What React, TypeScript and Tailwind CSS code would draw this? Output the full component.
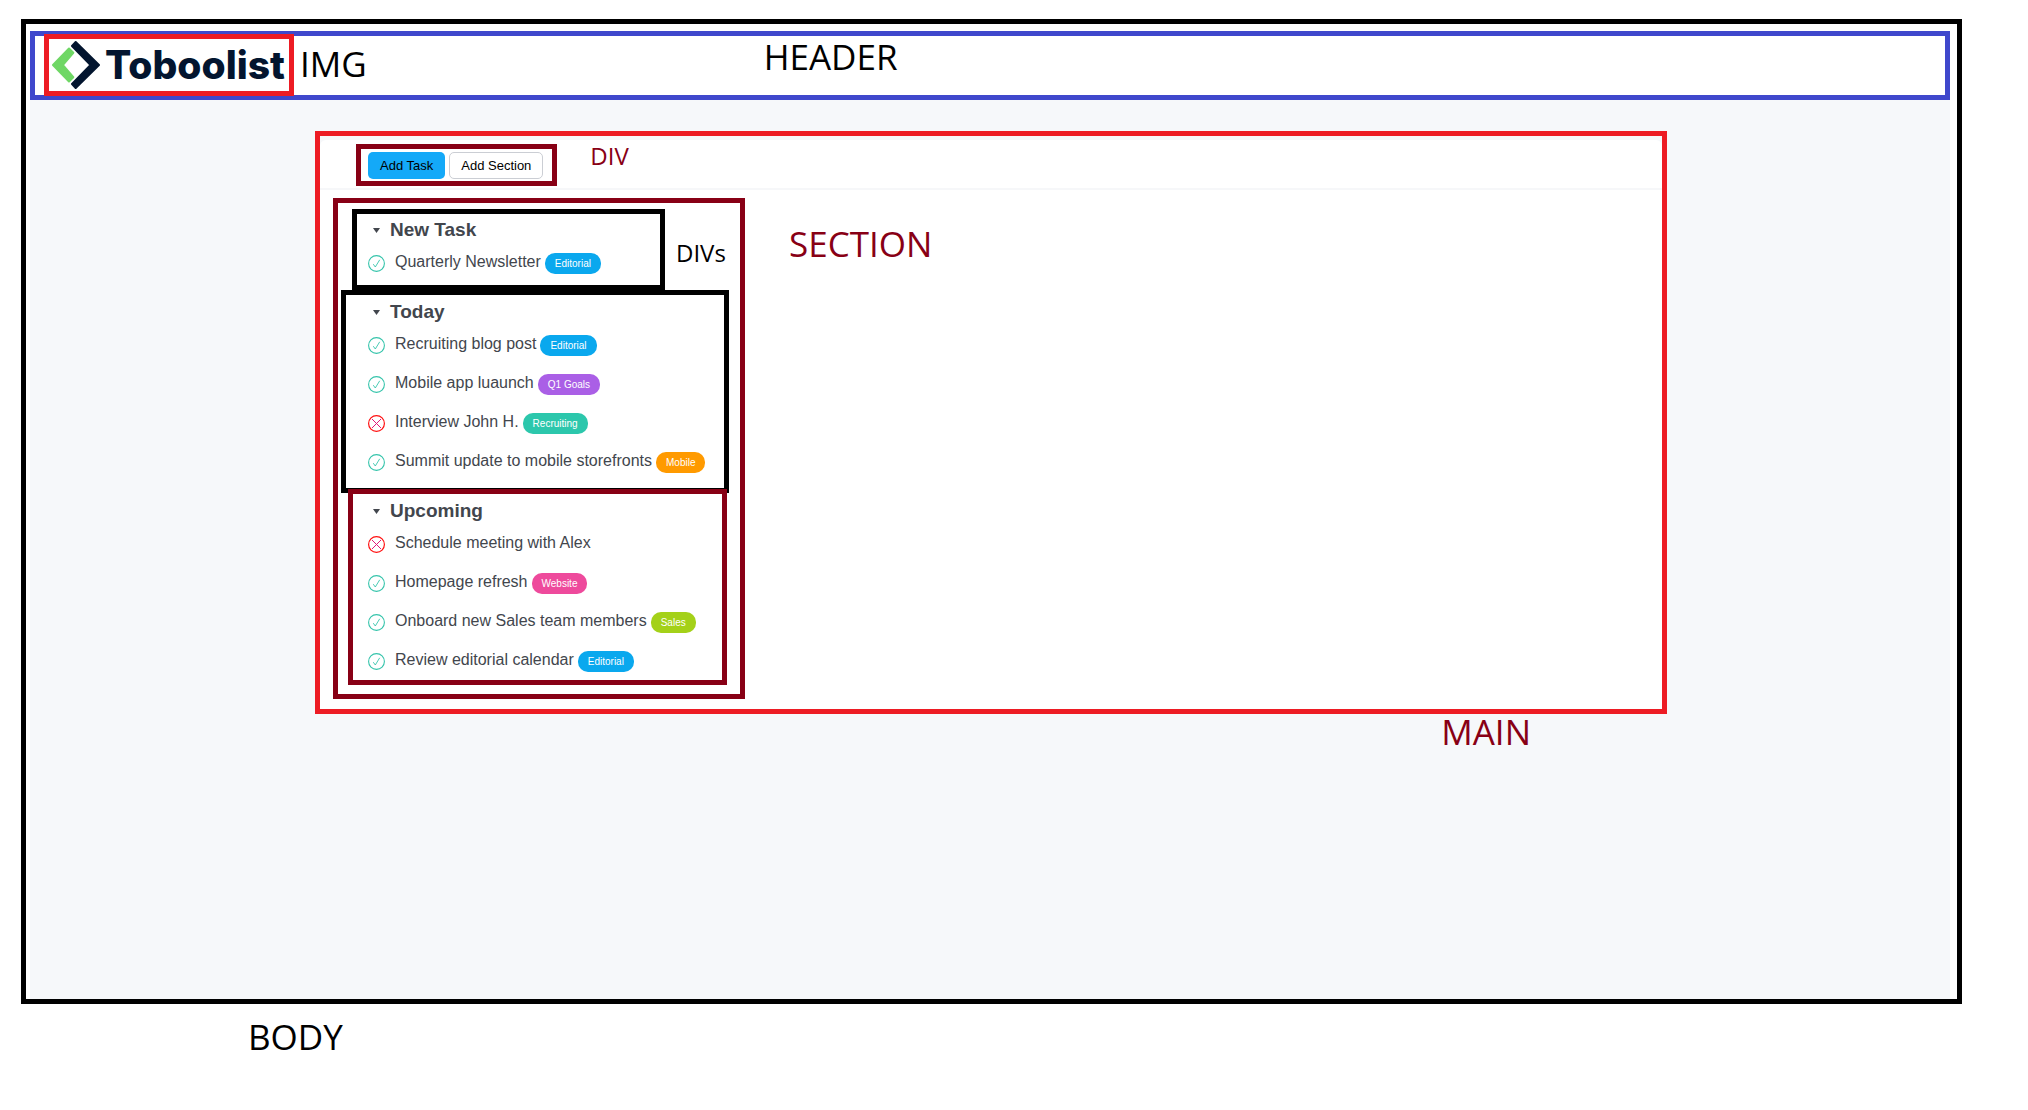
import { useState } from "react";
import type { ReactNode } from "react";

type Task = { title: string; done: boolean; tag?: string; tagClass?: string };

const newTasks: Task[] = [
  { title: "Quarterly Newsletter", done: true, tag: "Editorial", tagClass: "bg-[#0aa8ee]" },
];

const todayTasks: Task[] = [
  { title: "Recruiting blog post", done: true, tag: "Editorial", tagClass: "bg-[#0aa8ee]" },
  { title: "Mobile app luaunch", done: true, tag: "Q1 Goals", tagClass: "bg-[#aa5fe6]" },
  { title: "Interview John H.", done: false, tag: "Recruiting", tagClass: "bg-[#2cc7ac]" },
  { title: "Summit update to mobile storefronts", done: true, tag: "Mobile", tagClass: "bg-[#ff9a00]" },
];

const upcomingTasks: Task[] = [
  { title: "Schedule meeting with Alex", done: false },
  { title: "Homepage refresh", done: true, tag: "Website", tagClass: "bg-[#ee4a9c]" },
  { title: "Onboard new Sales team members", done: true, tag: "Sales", tagClass: "bg-[#a4d119]" },
  { title: "Review editorial calendar", done: true, tag: "Editorial", tagClass: "bg-[#0aa8ee]" },
];

function Logo() {
  return (
    <svg viewBox="0 0 48 48" className="size-12 shrink-0" strokeWidth="2" strokeLinejoin="round" aria-hidden="true">
      <path d="M17 7.5 L1 24 L17 40.5 L21.3 36.2 L10.8 24 L21.3 11.8 Z" fill="#6fd765" stroke="#6fd765" />
      <path d="M23.7 1 L47 24 L23.7 47 L20 43 L38.5 24 L20 5 Z" fill="#03152f" stroke="#03152f" />
    </svg>
  );
}

function StatusIcon({ done }: { done: boolean }) {
  return done ? (
    <svg viewBox="0 0 17 17" className="size-[17px]" fill="none" stroke="#35c4ab" aria-hidden="true">
      <circle cx="8.5" cy="8.5" r="7.9" strokeWidth="1.1" />
      <path d="M5.3 9.2 L7.3 12 L11.7 4.8" strokeWidth="0.9" />
    </svg>
  ) : (
    <svg viewBox="0 0 17 17" className="size-[17px]" fill="none" aria-hidden="true">
      <circle cx="8.5" cy="8.5" r="7.9" stroke="#ff1010" strokeWidth="1.2" />
      <path d="M4 4 L13 13 M13 4 L4 13" stroke="#e0187a" strokeWidth="1" />
    </svg>
  );
}

function TaskRow({ task }: { task: Task }) {
  const [done, setDone] = useState(task.done);
  return (
    <li className="flex h-6 items-baseline gap-1">
      <label className="flex h-6 cursor-pointer items-baseline gap-2.5 whitespace-nowrap">
        <input type="checkbox" className="sr-only" checked={done} onChange={() => setDone(!done)} />
        <span className="mb-0.5 self-end">
          <StatusIcon done={done} />
        </span>
        <span className="text-[16px] leading-6">{task.title}</span>
      </label>
      {task.tag && (
        <span className={`rounded-[10px] px-2.5 text-[10px] leading-[21px] text-white ${task.tagClass}`}>{task.tag}</span>
      )}
    </li>
  );
}

function TaskGroup({ title, tasks, className }: { title: string; tasks: Task[]; className: string }) {
  const [open, setOpen] = useState(true);
  return (
    <div className={`relative border-5 ${className}`}>
      <h3 className="ml-[5px] text-[19px] leading-6 font-bold">
        <button type="button" className="flex items-center gap-2.5" aria-expanded={open} onClick={() => setOpen(!open)}>
          <svg viewBox="0 0 7 5" className="h-[5px] w-[7px]" fill="#42464d" aria-hidden="true">
            <path d="M0 0 H7 L3.5 5 Z" />
          </svg>
          {title}
        </button>
      </h3>
      {open && (
        <ul className="mt-2 flex flex-col gap-[15px]">
          {tasks.map((task) => (
            <TaskRow key={task.title} task={task} />
          ))}
        </ul>
      )}
    </div>
  );
}

function Note({ className, children }: { className: string; children: ReactNode }) {
  return <p className={`font-['Open_Sans',sans-serif] leading-none whitespace-nowrap ${className}`}>{children}</p>;
}

export default function App() {
  return (
    <div className="flex min-h-screen flex-col bg-white pt-[19px] font-['Liberation_Sans',Arial,sans-serif] text-[#42464d]">
      <div className="mr-[66px] ml-[21px] flex flex-1 flex-col border-5 border-black pt-[7px] pr-[7px] pl-1">
        <header className="flex h-[69px] items-start border-5 border-[#3f48cc] pl-[9px]">
          <div className="-mt-0.5 flex h-[62px] w-[250px] items-center gap-[5px] border-5 border-[#ed1c24] pl-[3px]">
            <Logo />
            <span className="font-['Inter',sans-serif] text-[39px] leading-10 font-extrabold text-[#03152f]">Toboolist</span>
          </div>
          <Note className="mt-2.5 ml-1.5 text-[35px] text-black">IMG</Note>
          <Note className="mt-[3px] ml-[397px] text-[35px] text-black">HEADER</Note>
        </header>

        <div className="flex-1 bg-[#f6f8fa] pt-[31px] pl-0.5">
          <div className="mx-auto max-w-[1352px]">
            <main className="border-5 border-[#ed1c24] pt-1">
              <div className="flex items-start gap-[33px] rounded-t-md border-b-2 border-[#f6f7f9] bg-white pt-1 pb-0.5 pl-9">
                <div className="flex gap-1 border-5 border-[#880015] pt-[3px] pr-[9px] pb-0.5 pl-[7px]">
                  <button type="button" className="h-[27px] rounded-[5px] bg-[#14a9f8] px-3 text-[13px] text-black">
                    Add Task
                  </button>
                  <button
                    type="button"
                    className="h-[27px] rounded-[5px] border border-[#cbced4] bg-white px-[11px] text-[13px] text-black"
                  >
                    Add Section
                  </button>
                </div>
                <Note className="text-[24px] text-[#880015]">DIV</Note>
              </div>

              <div className="flex items-start gap-11 bg-white pt-2 pb-2.5 pl-[13px]">
                <section className="w-[412px] border-5 border-[#880015] pt-1.5 pb-[9px]">
                  <div className="flex items-start gap-[11px]">
                    <TaskGroup title="New Task" tasks={newTasks} className="ml-3.5 w-[313px] border-black pt-1 pb-[11px] pl-[11px]" />
                    <Note className="mt-8 text-[24px] text-black">DIVs</Note>
                  </div>
                  <TaskGroup title="Today" tasks={todayTasks} className="ml-[3px] w-[388px] border-black pt-[5px] pb-[15px] pl-[22px]" />
                  <TaskGroup
                    title="Upcoming"
                    tasks={upcomingTasks}
                    className="-mt-1 ml-2.5 w-[379px] border-[#880015] pt-[5px] pb-2 pl-[15px]"
                  />
                </section>
                <Note className="mt-7 text-[35px] text-[#880015]">SECTION</Note>
              </div>
            </main>
            <Note className="mr-[136px] text-right text-[35px] text-[#880015]">MAIN</Note>
          </div>
        </div>
      </div>
      <Note className="mt-[15px] mb-14 ml-[248px] text-[35px] text-black">BODY</Note>
    </div>
  );
}
